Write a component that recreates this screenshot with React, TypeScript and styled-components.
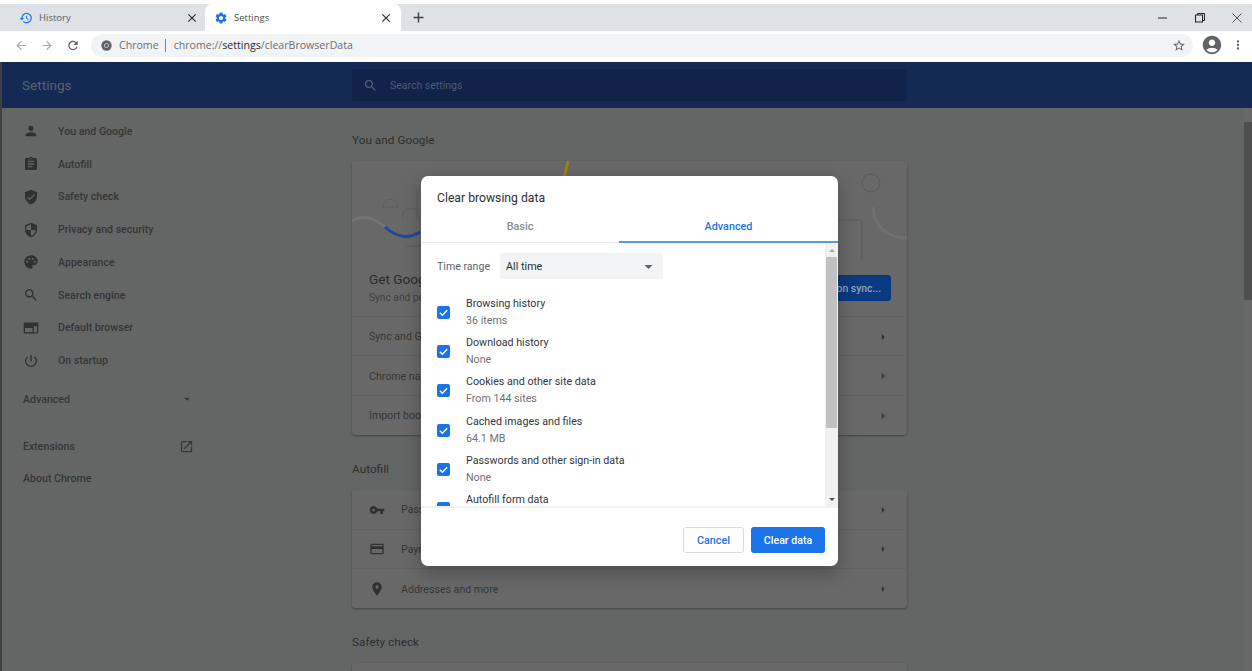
import React from "react";
import styled, { createGlobalStyle } from "styled-components";
import {
  MdPerson, MdAssignment, MdVerifiedUser, MdSecurity, MdPalette, MdSearch,
  MdPowerSettingsNew, MdOpenInNew, MdVpnKey, MdCreditCard, MdPlace, MdHistory, MdSettings,
  MdArrowBack, MdArrowForward, MdRefresh, MdStarBorder, MdAccountCircle, MdMoreVert,
  MdClose, MdAdd, MdArrowDropDown, MdArrowRight,
} from "react-icons/md";

const Global = createGlobalStyle`
  html, body { margin: 0; padding: 0; background: #fff; overflow: hidden; }
  body { font-family: Roboto, "Liberation Sans", sans-serif; }
  * { box-sizing: border-box; }
`;

const Frame = styled.div`
  position: relative;
  width: 1252px;
  height: 671px;
  padding-top: 4px;
  overflow: hidden;
  display: flex;
  flex-direction: column;
  background: #fff;
`;

const TabStrip = styled.div`
  height: 27px;
  flex: none;
  display: flex;
  align-items: stretch;
  padding-left: 2px;
  background: #dee1e6;
`;

const Tab = styled.div<{ $active?: boolean }>`
  width: ${(p) => (p.$active ? 196 : 203)}px;
  display: flex;
  align-items: center;
  padding: 0 ${(p) => (p.$active ? 8 : 6)}px 0 ${(p) => (p.$active ? 9 : 17)}px;
  gap: 6px;
  background: ${(p) => (p.$active ? "#fff" : "transparent")};
  border-radius: 7px 7px 0 0;
  font-family: "Open Sans", sans-serif;
  font-size: 9.5px;
  color: ${(p) => (p.$active ? "#4a4d51" : "#5a5d62")};
`;

const TabTitle = styled.span`
  flex: 1;
`;

const TabIcon = styled.span`
  display: flex;
  color: #1a73e8;
  font-size: 14px;
`;

const TabClose = styled.span`
  display: flex;
  color: #2a2b2d;
  font-size: 14px;
`;

const NewTab = styled.span`
  display: flex;
  margin-left: 9px;
  align-items: center;
  color: #3c4043;
  font-size: 17px;
`;

const WindowControls = styled.div`
  margin-left: auto;
  display: flex;
  align-items: center;
  gap: 25px;
  padding-right: 9px;
  color: #2a2b2d;
`;

const ToolBar = styled.div`
  height: 31px;
  flex: none;
  display: flex;
  align-items: center;
  padding: 0 7px 2px 14px;
  background: #fff;
  border-bottom: 1px solid #fff;
`;

const NavIcon = styled.span<{ $dim?: boolean }>`
  display: flex;
  width: 14px;
  margin-right: 12px;
  justify-content: center;
  font-size: 15px;
  color: ${(p) => (p.$dim ? "#a9adb2" : "#5f6368")};
`;

const Omnibox = styled.div`
  margin-left: -1px;
  width: 1102px;
  height: 23px;
  flex: none;
  background: #f1f3f4;
  border-radius: 12px;
  display: flex;
  align-items: center;
  padding: 0 7px 0 10px;
  font-family: "Open Sans", sans-serif;
  font-size: 10.6px;
  color: #6b6e72;
`;

const OmniLabel = styled.span`
  margin-left: 7px;
  padding-right: 6px;
  border-right: 1px solid #7d8084;
  line-height: 13px;
`;

const OmniUrl = styled.span`
  margin-left: 8px;
  flex: 1;
  b {
    font-weight: 400;
    color: #2a2c2f;
  }
`;

const ToolRight = styled.span<{ $w: number }>`
  display: flex;
  justify-content: center;
  flex: none;
  width: ${(p) => p.$w}px;
  color: #5f6368;
`;

const Header = styled.header`
  height: 46px;
  flex: none;
  margin-left: 2px;
  display: flex;
  align-items: center;
  background: #152955;
`;

const HeaderTitle = styled.div`
  width: 350px;
  padding-left: 20px;
  font-size: 13.6px;
  color: #5c6369;
`;

const SearchBox = styled.div`
  width: 555px;
  height: 32px;
  display: flex;
  align-items: center;
  gap: 12px;
  padding-left: 11px;
  background: #12234b;
  border-radius: 2px;
  font-size: 10.5px;
  color: #4d5a74;
`;

const SearchIconWrap = styled.span`
  display: flex;
  color: #4f5e78;
  font-size: 15px;
`;

const Body = styled.div`
  flex: 1;
  margin-left: 2px;
  display: flex;
  min-height: 0;
  background: #646665;
`;

const Side = styled.nav`
  width: 350px;
  flex: none;
  padding-top: 7px;
`;

const SideRow = styled.div`
  height: 32.75px;
  display: flex;
  align-items: center;
  padding-left: 21px;
  font-size: 10.6px;
  font-weight: 500;
  color: #343536;
`;

const SideIcon = styled.span`
  width: 16px;
  display: flex;
  justify-content: center;
  margin-right: 19px;
  font-size: 16px;
  color: #2f3031;
`;

const SideFlat = styled.div`
  width: 171px;
  height: 32.75px;
  margin-left: 21px;
  display: flex;
  align-items: center;
  justify-content: space-between;
  font-size: 10.6px;
  font-weight: 500;
  color: #343536;
`;

const SideGap = styled.div`
  height: 6px;
`;

const SideRule = styled.div`
  height: 7px;
  margin-top: 7px;
  width: 206px;
  border-top: 1px solid #626463;
`;

const Main = styled.main`
  width: 555px;
  flex: none;
`;

const SectionTitle = styled.h2<{ $first?: boolean }>`
  margin: 0;
  height: ${(p) => (p.$first ? 53 : 55)}px;
  display: flex;
  align-items: center;
  padding-top: ${(p) => (p.$first ? 11 : 13)}px;
  font-size: 11.8px;
  font-weight: 400;
  color: #2c2d2d;
`;

const Card = styled.section`
  background: #686868;
  border-radius: 3px;
  box-shadow: 0 1px 2px rgba(30, 30, 30, 0.5);
  overflow: hidden;
`;

const Banner = styled.div`
  height: 156px;
  display: flex;
  flex-direction: column;
  border-bottom: 1px solid #616262;
`;

const BannerArt = styled.svg`
  width: 555px;
  height: 100px;
  flex: none;
  display: block;
`;

const BannerBody = styled.div`
  padding: 10px 16px 0 17px;
  display: flex;
  align-items: flex-start;
  justify-content: space-between;
`;

const BannerHead = styled.div`
  font-size: 13.6px;
  line-height: 16px;
  color: #2a2b2b;
  margin-bottom: 5px;
`;

const BannerSub = styled.div`
  font-size: 10.2px;
  line-height: 12px;
  color: #3f4040;
`;

const SyncButton = styled.div`
  width: 88px;
  height: 26px;
  margin-top: 4px;
  border-radius: 3px;
  background: #0a3a7f;
  display: flex;
  align-items: center;
  justify-content: center;
  font-size: 10.4px;
  font-weight: 500;
  color: #8fa3c4;
`;

const Row = styled.div`
  height: 39.4px;
  display: flex;
  align-items: center;
  padding: 1px 20px 0 17px;
  font-size: 10.6px;
  color: #353636;
  &:not(:last-child) {
    border-bottom: 1px solid #616262;
  }
`;

const RowIcon = styled.span`
  width: 16px;
  display: flex;
  justify-content: center;
  margin-right: 16px;
  font-size: 16px;
  color: #2f3031;
`;

const RowText = styled.span`
  flex: 1;
`;

const Caret = styled.span`
  display: flex;
  font-size: 14px;
  color: #2f3031;
  margin-right: -3px;
`;

const PageTrack = styled.div`
  width: 8px;
  flex: none;
  margin-left: auto;
  padding-top: 14px;
  background: #686868;
`;

const PageThumb = styled.div`
  height: 178px;
  background: #4f4f4f;
`;

const Dialog = styled.div`
  position: absolute;
  left: 421px;
  top: 176px;
  width: 417px;
  height: 390px;
  display: flex;
  flex-direction: column;
  background: #fff;
  border-radius: 7px;
  box-shadow: 0 6px 18px rgba(0, 0, 0, 0.28);
  overflow: hidden;
`;

const DialogTitle = styled.div`
  height: 42px;
  flex: none;
  display: flex;
  align-items: center;
  padding: 1px 16px 0;
  font-size: 12.2px;
  color: #2d2f33;
`;

const Tabs = styled.div`
  height: 25px;
  flex: none;
  display: flex;
  border-bottom: 1px solid #e8eaed;
`;

const DialogTab = styled.div<{ $active?: boolean }>`
  flex: none;
  width: ${(p) => (p.$active ? 219 : 198)}px;
  display: flex;
  align-items: center;
  justify-content: center;
  margin-bottom: -1px;
  padding-bottom: 7px;
  font-size: 10.8px;
  font-weight: 500;
  color: ${(p) => (p.$active ? "#1a73e8" : "#8a8c90")};
  border-bottom: 2px solid ${(p) => (p.$active ? "#5a95e6" : "transparent")};
`;

const Scroller = styled.div`
  flex: 1;
  min-height: 0;
  display: flex;
  overflow: hidden;
  border-bottom: 2px solid #f1f3f4;
`;

const ScrollContent = styled.div`
  flex: 1;
  padding: 10px 16px 0;
  overflow: hidden;
`;

const RangeRow = styled.div`
  display: flex;
  align-items: center;
  gap: 10px;
  font-size: 10.6px;
  color: #5f6368;
  margin-bottom: 14px;
`;

const SelectBox = styled.div`
  width: 163px;
  height: 26px;
  display: flex;
  align-items: center;
  justify-content: space-between;
  padding: 0 5px 0 6px;
  background: #f1f3f4;
  border-radius: 3px;
  font-size: 10.8px;
  color: #2f3134;
`;

const SelectCaret = styled.span`
  display: flex;
  font-size: 19px;
  color: #5f6368;
`;

const CheckRow = styled.div`
  height: 39.2px;
  display: flex;
  align-items: center;
  gap: 16px;
`;

const CheckBox = styled.span`
  width: 13px;
  height: 13px;
  flex: none;
  display: flex;
  align-items: center;
  justify-content: center;
  background: #1a73e8;
  border-radius: 2px;
`;

const CheckText = styled.div`
  display: flex;
  flex-direction: column;
  gap: 5px;
`;

const CheckLabel = styled.span`
  font-size: 10.7px;
  line-height: 12px;
  color: #33363a;
`;

const CheckSub = styled.span`
  font-size: 10.7px;
  line-height: 12px;
  color: #6f7276;
`;

const ScrollTrack = styled.div`
  width: 13px;
  flex: none;
  display: flex;
  flex-direction: column;
  background: #f1f1f1;
  padding: 0 1px;
`;

const ScrollArrow = styled.div<{ $down?: boolean }>`
  height: 14px;
  flex: none;
  display: flex;
  align-items: center;
  justify-content: center;
  margin-top: ${(p) => (p.$down ? "auto" : "0")};
  &::before {
    content: "";
    border-left: 3px solid transparent;
    border-right: 3px solid transparent;
    ${(p) => (p.$down ? "border-top: 3px solid #505050;" : "border-bottom: 3px solid #a3a3a3;")}
  }
`;

const ScrollThumb = styled.div`
  height: 171px;
  flex: none;
  background: #c1c1c1;
`;

const Footer = styled.div`
  height: 58px;
  flex: none;
  display: flex;
  justify-content: flex-end;
  align-items: flex-start;
  gap: 7px;
  padding: 19px 13px 0 0;
`;

const CancelButton = styled.div`
  width: 61px;
  height: 26px;
  display: flex;
  align-items: center;
  justify-content: center;
  border: 1px solid #dadce0;
  border-radius: 3px;
  font-size: 10.8px;
  font-weight: 500;
  color: #1a73e8;
`;

const ClearButton = styled.div`
  width: 74px;
  height: 26px;
  display: flex;
  align-items: center;
  justify-content: center;
  background: #1a73e8;
  border-radius: 3px;
  font-size: 10.6px;
  font-weight: 500;
  color: #fff;
`;

const LeftEdge = styled.div`
  position: absolute;
  left: 0;
  top: 62px;
  bottom: 0;
  width: 2px;
  background: #3f4041;
`;

const Check = () => (
  <svg width="11" height="11" viewBox="0 0 24 24" fill="none" stroke="#fff" strokeWidth="3">
    <path d="M4 12.500l5.500 5.500L20 7" />
  </svg>
);

const ChromeMark = () => (
  <svg width="11" height="11" viewBox="0 0 16 16">
    <circle cx="8" cy="8" r="7.500" fill="#5f6368" />
    <circle cx="8" cy="8" r="3.400" fill="#f1f3f4" />
    <circle cx="8" cy="8" r="2.400" fill="#5f6368" />
  </svg>
);

const DefaultBrowserIcon = () => (
  <svg width="16" height="16" viewBox="0 0 16 16" fill="#2f3031">
    <path fillRule="evenodd" d="M1.500 2.500h13a.8.8 0 0 1 .8.8v9.400a.8.8 0 0 1-.8.8h-13a.8.8 0 0 1-.8-.8V3.300a.8.8 0 0 1 .8-.8zM2 6v6.200h7.500V8H2V6zm8.800 0v6.200H14V6h-3.200z" />
  </svg>
);

const MinimizeIcon = () => (
  <svg width="12" height="12" viewBox="0 0 12 12">
    <path d="M1 6h9" stroke="#222" strokeWidth="1" />
  </svg>
);

const RestoreIcon = () => (
  <svg width="12" height="12" viewBox="0 0 12 12" fill="none" stroke="#222" strokeWidth="1">
    <rect x="1.500" y="3" width="7" height="7" />
    <path d="M3.500 3V1.500h7v7H8.500" />
  </svg>
);

const CloseIcon = () => (
  <svg width="12" height="12" viewBox="0 0 12 12" fill="none" stroke="#444" strokeWidth="0.9">
    <path d="M1.500 1.500l9 9M10.500 1.500l-9 9" />
  </svg>
);

const sideItems: [string, React.ReactNode][] = [
  ["You and Google", <MdPerson />],
  ["Autofill", <MdAssignment />],
  ["Safety check", <MdVerifiedUser />],
  ["Privacy and security", <MdSecurity />],
  ["Appearance", <MdPalette />],
  ["Search engine", <MdSearch />],
  ["Default browser", <DefaultBrowserIcon />],
  ["On startup", <MdPowerSettingsNew />],
];

const checks: [string, string][] = [
  ["Browsing history", "36 items"],
  ["Download history", "None"],
  ["Cookies and other site data", "From 144 sites"],
  ["Cached images and files", "64.1 MB"],
  ["Passwords and other sign-in data", "None"],
  ["Autofill form data", "None"],
];

export default function App() {
  return (
    <Frame>
      <Global />
      <TabStrip>
        <Tab>
          <TabIcon><MdHistory /></TabIcon>
          <TabTitle>History</TabTitle>
          <TabClose><MdClose /></TabClose>
        </Tab>
        <Tab $active>
          <TabIcon><MdSettings /></TabIcon>
          <TabTitle>Settings</TabTitle>
          <TabClose><MdClose /></TabClose>
        </Tab>
        <NewTab><MdAdd /></NewTab>
        <WindowControls>
          <MinimizeIcon />
          <RestoreIcon />
          <CloseIcon />
        </WindowControls>
      </TabStrip>
      <ToolBar>
        <NavIcon $dim><MdArrowBack /></NavIcon>
        <NavIcon $dim><MdArrowForward /></NavIcon>
        <NavIcon><MdRefresh /></NavIcon>
        <Omnibox>
          <ChromeMark />
          <OmniLabel>Chrome</OmniLabel>
          <OmniUrl>chrome://<b>settings</b>/clearBrowserData</OmniUrl>
          <ToolRight $w={14}><MdStarBorder size={15} /></ToolRight>
        </Omnibox>
        <ToolRight $w={38}><MdAccountCircle size={22} /></ToolRight>
        <ToolRight $w={14}><MdMoreVert size={16} /></ToolRight>
      </ToolBar>
      <Header>
        <HeaderTitle>Settings</HeaderTitle>
        <SearchBox>
          <SearchIconWrap><MdSearch /></SearchIconWrap>
          Search settings
        </SearchBox>
      </Header>
      <Body>
        <Side>
          {sideItems.map(([label, icon]) => (
            <SideRow key={label}>
              <SideIcon>{icon}</SideIcon>
              {label}
            </SideRow>
          ))}
          <SideGap />
          <SideFlat>
            Advanced
            <MdArrowDropDown size={14} />
          </SideFlat>
          <SideRule />
          <SideFlat>
            Extensions
            <MdOpenInNew size={15} />
          </SideFlat>
          <SideFlat>About Chrome</SideFlat>
        </Side>
        <Main>
          <SectionTitle $first>You and Google</SectionTitle>
          <Card>
            <Banner>
              <BannerArt viewBox="0 0 555 100" fill="none">
                <path d="M0 60c6-4 18-7 33 6" stroke="#747474" strokeWidth="3" />
                <path d="M33 66c12 11 24 12 35 5" stroke="#1e4a9c" strokeWidth="3" />
                <path d="M31 46a7.500 7.500 0 0 1 15 0z" stroke="#595959" strokeWidth="0.7" />
                <path d="M51 57a8 8 0 0 1 14-7M65 29v28" stroke="#595959" strokeWidth="0.7" />
                <path d="M54 85h40" stroke="#595959" strokeWidth="0.7" />
                <path d="M216 0l-4 17" stroke="#a37c14" strokeWidth="3" />
                <circle cx="519" cy="22" r="9" stroke="#555" strokeWidth="0.7" />
                <path d="M521 46c0 18 14 31 34 31" stroke="#707070" strokeWidth="3" />
                <path d="M480 59h27a3 3 0 0 1 3 3v36" stroke="#555" strokeWidth="0.7" />
              </BannerArt>
              <BannerBody>
                <div>
                  <BannerHead>Get Google smarts in Chrome</BannerHead>
                  <BannerSub>Sync and personalize Chrome across your devices</BannerSub>
                </div>
                <SyncButton>Turn on sync...</SyncButton>
              </BannerBody>
            </Banner>
            <Row><RowText>Sync and Google services</RowText><Caret><MdArrowRight /></Caret></Row>
            <Row><RowText>Chrome name and picture</RowText><Caret><MdArrowRight /></Caret></Row>
            <Row><RowText>Import bookmarks and settings</RowText><Caret><MdArrowRight /></Caret></Row>
          </Card>
          <SectionTitle>Autofill</SectionTitle>
          <Card>
            <Row><RowIcon><MdVpnKey /></RowIcon><RowText>Passwords</RowText><Caret><MdArrowRight /></Caret></Row>
            <Row><RowIcon><MdCreditCard /></RowIcon><RowText>Payment methods</RowText><Caret><MdArrowRight /></Caret></Row>
            <Row><RowIcon><MdPlace /></RowIcon><RowText>Addresses and more</RowText><Caret><MdArrowRight /></Caret></Row>
          </Card>
          <SectionTitle>Safety check</SectionTitle>
          <Card>
            <Row><RowText>Check now</RowText></Row>
          </Card>
        </Main>
        <PageTrack><PageThumb /></PageTrack>
      </Body>
      <LeftEdge />
      <Dialog>
        <DialogTitle>Clear browsing data</DialogTitle>
        <Tabs>
          <DialogTab>Basic</DialogTab>
          <DialogTab $active>Advanced</DialogTab>
        </Tabs>
        <Scroller>
          <ScrollContent>
            <RangeRow>
              Time range
              <SelectBox>
                All time
                <SelectCaret><MdArrowDropDown /></SelectCaret>
              </SelectBox>
            </RangeRow>
            {checks.map(([label, sub]) => (
              <CheckRow key={label}>
                <CheckBox><Check /></CheckBox>
                <CheckText>
                  <CheckLabel>{label}</CheckLabel>
                  <CheckSub>{sub}</CheckSub>
                </CheckText>
              </CheckRow>
            ))}
          </ScrollContent>
          <ScrollTrack>
            <ScrollArrow />
            <ScrollThumb />
            <ScrollArrow $down />
          </ScrollTrack>
        </Scroller>
        <Footer>
          <CancelButton>Cancel</CancelButton>
          <ClearButton>Clear data</ClearButton>
        </Footer>
      </Dialog>
    </Frame>
  );
}
